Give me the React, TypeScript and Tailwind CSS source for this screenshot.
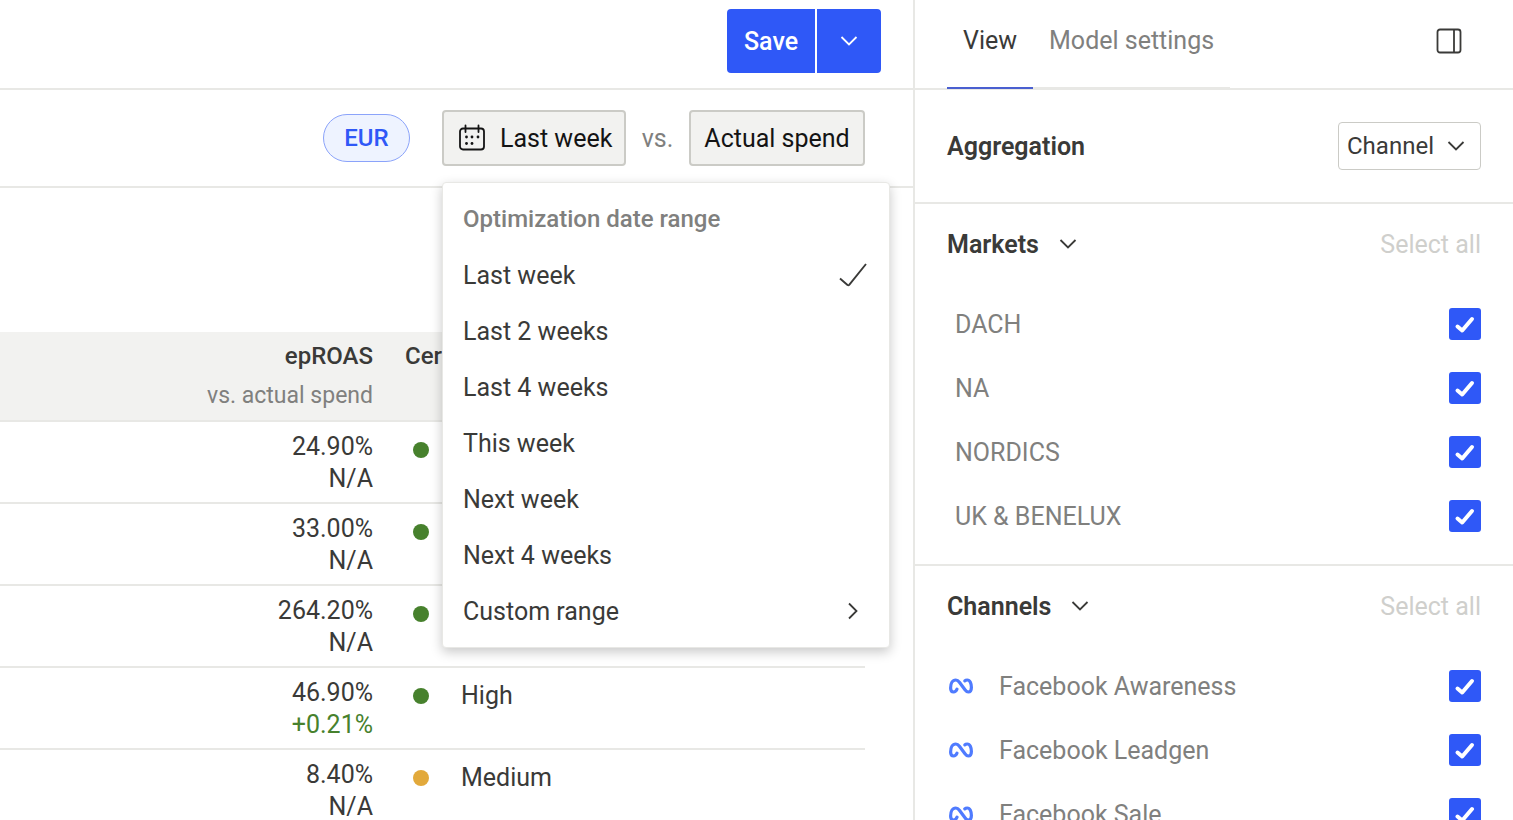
import React, { useState } from "react";

/* ================= DATA ================= */
const dateRanges = [
  "Last week",
  "Last 2 weeks",
  "Last 4 weeks",
  "This week",
  "Next week",
  "Next 4 weeks",
];

type Row = {
  value: string;
  change: string;
  certainty: "High" | "Medium";
};

const rows: Row[] = [
  { value: "24.90%", change: "N/A", certainty: "High" },
  { value: "33.00%", change: "N/A", certainty: "High" },
  { value: "264.20%", change: "N/A", certainty: "High" },
  { value: "46.90%", change: "+0.21%", certainty: "High" },
  { value: "8.40%", change: "N/A", certainty: "Medium" },
];

const markets = ["DACH", "NA", "NORDICS", "UK & BENELUX"];
const channels = ["Facebook Awareness", "Facebook Leadgen", "Facebook Sale"];

/* ================= ICONS ================= */
function Chevron({ className = "" }: { className?: string }) {
  return (
    <svg viewBox="0 0 18 18" className={`size-[18px] ${className}`} fill="none" stroke="currentColor" strokeWidth="1.8">
      <path d="M1.5 5 L9 12.5 L16.5 5" />
    </svg>
  );
}

function CalendarIcon() {
  return (
    <svg viewBox="0 0 28 28" className="size-7" fill="none" stroke="currentColor" strokeWidth="1.8">
      <rect x="2" y="4.5" width="24" height="21" rx="3" />
      <path d="M7.5 1.5v6.5M20.5 1.5v6.5" strokeLinecap="round" />
      <g fill="currentColor" stroke="none">
        <circle cx="8.5" cy="13" r="1.4" />
        <circle cx="14" cy="13" r="1.4" />
        <circle cx="20" cy="13" r="1.4" />
        <circle cx="8.5" cy="19.5" r="1.4" />
        <circle cx="14" cy="19.5" r="1.4" />
      </g>
    </svg>
  );
}

function PanelIcon() {
  return (
    <svg viewBox="0 0 26 26" className="size-[26px]" fill="none" stroke="currentColor" strokeWidth="1.8">
      <rect x="1.5" y="1.5" width="23" height="23" rx="2.5" />
      <path d="M18 1.5v23" />
    </svg>
  );
}

function MetaIcon() {
  return (
    <svg viewBox="0 0 28 18" className="h-[18px] w-7 shrink-0" fill="none" stroke="#4f7bff" strokeWidth="3.2" strokeLinecap="round" strokeLinejoin="round">
      <path d="M10 12.2 C9.2 14 8.2 15 6.6 15 C4.6 15 3.6 13.4 3.6 11 C3.6 6.6 5.4 3 8.8 3 C10.4 3 11.4 3.8 12.4 5.2 L18 12.8 C19.2 14.4 20 15 21.2 15 C23.4 15 24.4 13.2 24.4 10.6 C24.4 6.4 23 3 20.2 3 C19.2 3 18.4 3.2 17.8 3.8" />
    </svg>
  );
}

/* ================= SIDEBAR PARTS ================= */
function CheckRow({ label, icon }: { label: string; icon?: React.ReactNode }) {
  return (
    <label className={`flex h-16 items-center gap-6 text-[#80807e] ${icon ? "" : "pl-2"}`}>
      {icon}
      <span className="flex-1">{label}</span>
      <span className="grid">
        <input
          type="checkbox"
          defaultChecked
          className="peer col-start-1 row-start-1 size-8 appearance-none rounded-[3px] border-2 border-[#c9c9c5] checked:border-0 checked:bg-[#2f58f7]"
        />
        <svg
          viewBox="0 0 32 32"
          className="pointer-events-none invisible col-start-1 row-start-1 size-8 peer-checked:visible"
          fill="none"
          stroke="#fff"
          strokeWidth="4"
          strokeLinecap="round"
          strokeLinejoin="round"
        >
          <path d="M8.5 18.5 L13.2 22.5 L23 11" />
        </svg>
      </span>
    </label>
  );
}

function FilterSection({ title, children }: { title: string; children: React.ReactNode }) {
  return (
    <section className="border-b-2 border-[#e8e8e5] px-8">
      <div className="flex h-20 items-center justify-between">
        <button type="button" className="flex items-center gap-5 font-semibold">
          {title}
          <Chevron />
        </button>
        <button type="button" className="text-[#cfcfcc]">
          Select all
        </button>
      </div>
      <div className="pt-2 pb-4">{children}</div>
    </section>
  );
}

export default function App() {
  const [range, setRange] = useState("Last week");
  const [open, setOpen] = useState(true);

  return (
    <div className="flex h-screen overflow-hidden bg-white font-['Roboto',sans-serif] text-[25px] leading-[33px] text-[#3a3a38]">
      <main className="min-w-0 flex-1">
        {/* ================= TOP BAR ================= */}
        <header className="flex h-[90px] justify-end gap-0.5 border-b-2 border-[#e8e8e5] pt-[9px] pr-8">
          <button type="button" className="h-16 w-22 rounded-l-[4px] bg-[#2f58f7] font-medium text-white">
            Save
          </button>
          <button
            type="button"
            aria-label="More save options"
            className="flex h-16 w-16 items-center justify-center rounded-r-[4px] bg-[#2f58f7] text-white"
          >
            <Chevron />
          </button>
        </header>

        {/* ================= TOOLBAR ================= */}
        <div className="flex h-[98px] items-center justify-end border-b-2 border-[#e8e8e5] pr-12 text-[#141414]">
          <button
            type="button"
            className="mr-8 h-12 w-[87px] rounded-full border border-[#8ba3fa] bg-[#eef3ff] text-2xl font-medium text-[#2f58f7]"
          >
            EUR
          </button>
          <div className="relative">
            <button
              type="button"
              aria-expanded={open}
              onClick={() => setOpen(!open)}
              className="flex h-14 w-46 items-center gap-3.5 rounded-[4px] border-2 border-[#cbcbc6] bg-[#f2f2f0] pl-3.5 whitespace-nowrap"
            >
              <CalendarIcon />
              {range}
            </button>

            {open && (
              <div
                role="menu"
                className="absolute top-full left-0 z-10 mt-4 w-112 rounded-[4px] border border-[#e8e8e5] bg-white py-2 text-[#3a3a38] shadow-[0_4px_12px_rgba(0,0,0,0.22)]"
              >
                <div className="flex h-14 items-center px-5 text-2xl font-medium text-[#80807e]">
                  Optimization date range
                </div>
                {dateRanges.map((item) => (
                  <button
                    key={item}
                    type="button"
                    role="menuitemradio"
                    aria-checked={item === range}
                    onClick={() => setRange(item)}
                    className="flex h-14 w-full items-center justify-between px-5"
                  >
                    {item}
                    {item === range && (
                      <svg viewBox="0 0 32 32" className="size-8" fill="none" stroke="currentColor" strokeWidth="1.9" strokeLinejoin="round">
                        <path d="M3 19.5 L10.5 26 Q11.5 26.6 12.4 25.6 L29 5" />
                      </svg>
                    )}
                  </button>
                ))}
                <button type="button" role="menuitem" className="flex h-14 w-full items-center justify-between pr-[27px] pl-5">
                  Custom range
                  <Chevron className="-rotate-90" />
                </button>
              </div>
            )}
          </div>
          <span className="w-[63px] text-center text-[#80807e]">vs.</span>
          <button
            type="button"
            className="h-14 w-44 rounded-[4px] border-2 border-[#cbcbc6] bg-[#f2f2f0] whitespace-nowrap"
          >
            Actual spend
          </button>
        </div>

        {/* ================= TABLE ================= */}
        <div className="pt-36 pr-12">
          <table className="w-full border-collapse leading-8">
            <thead>
              <tr className="border-b-2 border-[#e8e8e5] bg-[#f2f2f0] text-2xl leading-10">
                <th className="py-1 pr-4 text-right font-medium">
                  epROAS
                  <div className="text-[23px] font-normal text-[#80807e]">vs. actual spend</div>
                </th>
                <th className="w-[476px] py-1 pl-4 text-left align-top font-medium">Certainty</th>
              </tr>
            </thead>
            <tbody>
              {rows.map((row) => (
                <tr key={row.value} className="border-b-2 border-[#e8e8e5]">
                  <td className="pt-[9px] pr-4 pb-[7px] text-right">
                    <div>{row.value}</div>
                    <div className={row.change.startsWith("+") ? "text-[#47812d]" : ""}>{row.change}</div>
                  </td>
                  <td className="pt-[11px] pl-6 align-top leading-[33px]">
                    <div className="flex items-center gap-8">
                      <span className={`size-4 rounded-full ${row.certainty === "High" ? "bg-[#47812d]" : "bg-[#e2a93b]"}`} />
                      {row.certainty}
                    </div>
                  </td>
                </tr>
              ))}
            </tbody>
          </table>
        </div>
      </main>

      {/* ================= SIDEBAR ================= */}
      <aside className="w-150 shrink-0 border-l-2 border-[#e8e8e5]">
        <div className="flex h-[90px] items-start justify-between border-b-2 border-[#e8e8e5] pl-8">
          <div role="tablist" className="flex">
            <button type="button" role="tab" aria-selected="true" className="h-[89px] border-b-2 border-[#4a5fd0] px-4 pb-1.5">
              View
            </button>
            <button type="button" role="tab" aria-selected="false" className="h-[89px] border-b-2 border-[#e8e8e5] px-4 pb-1.5 text-[#80807e]">
              Model settings
            </button>
          </div>
          <button type="button" aria-label="Toggle panel" className="mt-7 mr-[51px]">
            <PanelIcon />
          </button>
        </div>

        <div className="flex items-center justify-between border-b-2 border-[#e8e8e5] px-8 py-8">
          <label htmlFor="aggregation" className="font-semibold">
            Aggregation
          </label>
          <div className="grid items-center">
            <select
              id="aggregation"
              className="col-start-1 row-start-1 h-12 w-[143px] appearance-none rounded-[4px] border border-[#cbcbc6] bg-white pl-2 text-2xl"
            >
              <option>Channel</option>
              <option>Market</option>
            </select>
            <Chevron className="pointer-events-none col-start-1 row-start-1 mr-4 justify-self-end" />
          </div>
        </div>

        <FilterSection title="Markets">
          {markets.map((m) => (
            <CheckRow key={m} label={m} />
          ))}
        </FilterSection>

        <FilterSection title="Channels">
          {channels.map((c) => (
            <CheckRow key={c} label={c} icon={<MetaIcon />} />
          ))}
        </FilterSection>
      </aside>
    </div>
  );
}
